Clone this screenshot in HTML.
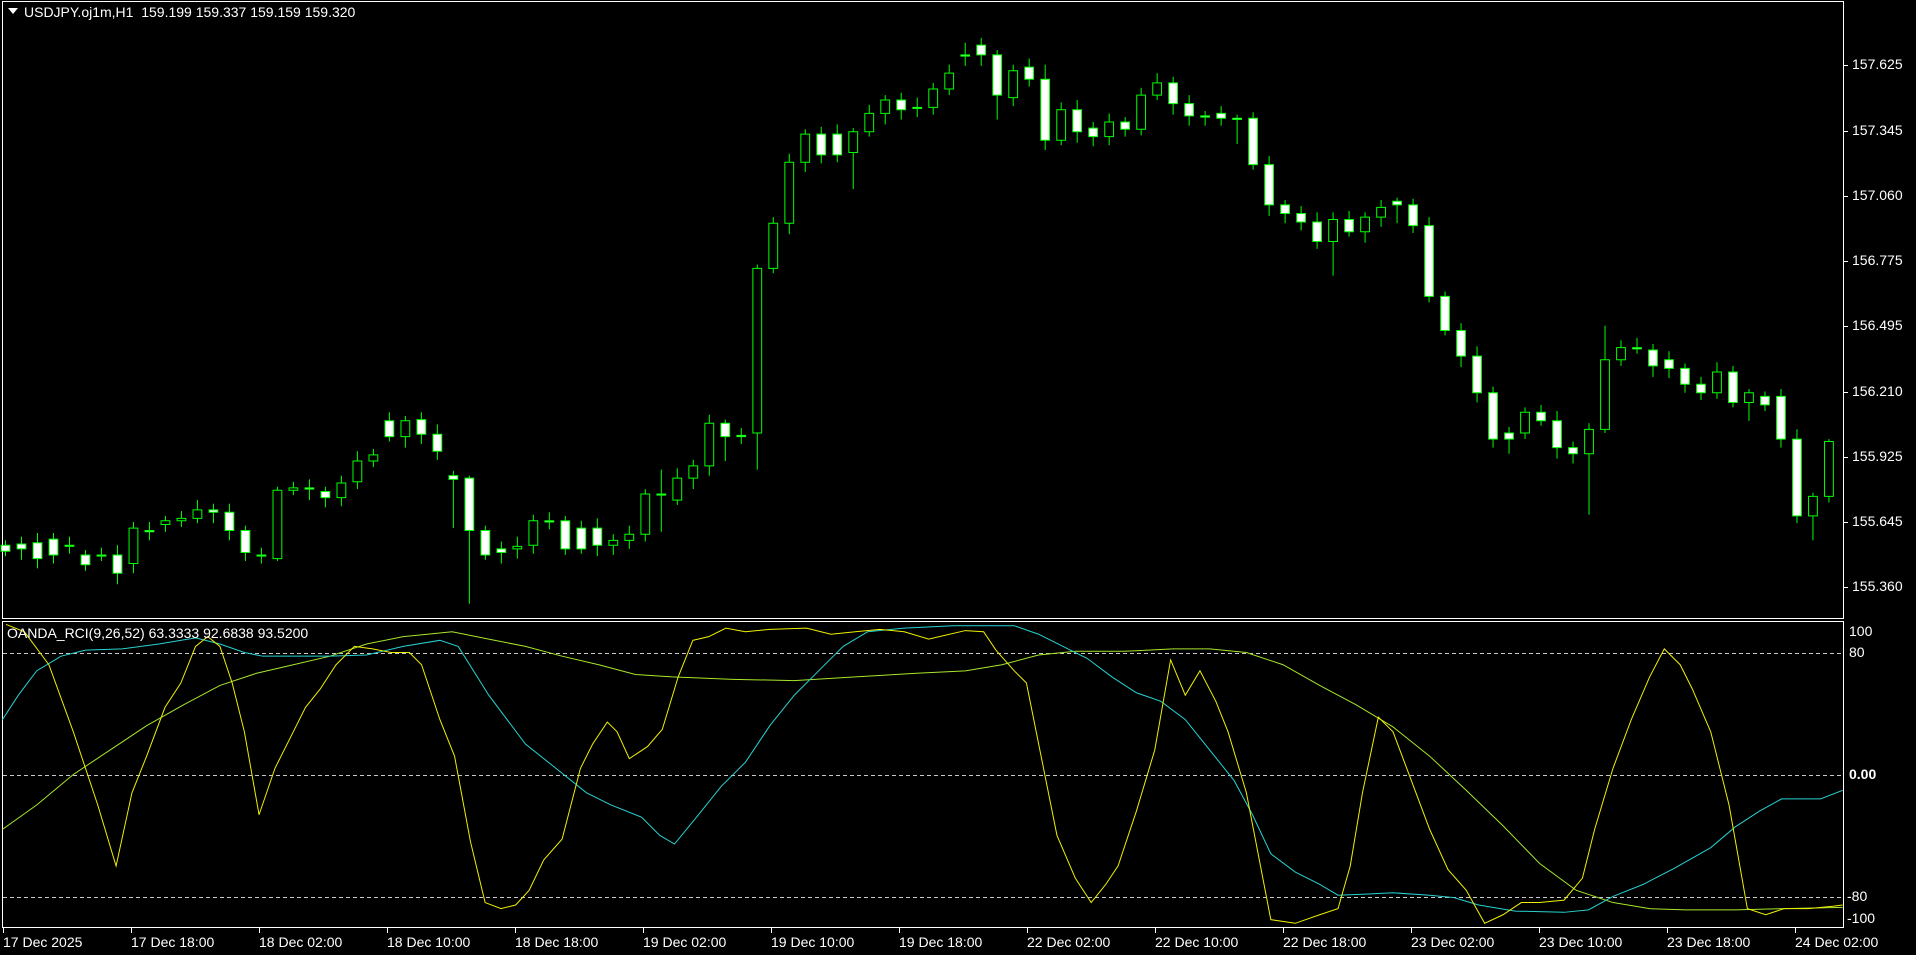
<!DOCTYPE html>
<html><head><meta charset="utf-8">
<style>
html,body{margin:0;padding:0;background:#000;width:1916px;height:955px;overflow:hidden;font-family:"Liberation Sans",sans-serif;}
.t{position:absolute;color:#fff;font-size:14px;white-space:nowrap;line-height:15px;}
</style></head><body>
<svg id="fr" width="1916" height="955" style="position:absolute;left:0;top:0" xmlns="http://www.w3.org/2000/svg">
<g stroke="#fff" stroke-width="1" fill="none" shape-rendering="crispEdges">
<rect x="2.5" y="1.5" width="1841" height="617"/>
<rect x="2.5" y="621.5" width="1841" height="306"/>
</g>
<g stroke="#c8c8c8" stroke-dasharray="4,3" shape-rendering="crispEdges">
<line x1="3" x2="1843" y1="653.5" y2="653.5"/>
<line x1="3" x2="1843" y1="775.5" y2="775.5"/>
<line x1="3" x2="1843" y1="897.5" y2="897.5"/>
</g>
<g id="ticks" stroke="#fff" shape-rendering="crispEdges"></g>
<path d="M8 8 L18 8 L13 14 Z" fill="#fff"/>
</svg>
<svg id="ch" width="1916" height="955" viewBox="0 0 1568 783" preserveAspectRatio="none" style="position:absolute;left:0;top:0" xmlns="http://www.w3.org/2000/svg"></svg>
<div class="t" style="left:24px;top:5px">USDJPY.oj1m,H1&nbsp; 159.199 159.337 159.159 159.320</div>
<div class="t" style="left:7px;top:626px">OANDA_RCI(9,26,52) 63.3333 92.6838 93.5200</div>
<div id="lbl"></div>
<script>
var lbl=document.getElementById('lbl'),ticks=document.getElementById('ticks'),h='',tk='';
var prices=[['157.625',65],['157.345',131],['157.060',196],['156.775',261],['156.495',326],['156.210',392],['155.925',457],['155.645',522],['155.360',587]];
prices.forEach(function(p){h+='<div class="t" style="left:1852px;top:'+(p[1]-8)+'px">'+p[0]+'</div>';tk+='<line x1="1844" x2="1848" y1="'+(p[1]+.5)+'" y2="'+(p[1]+.5)+'"/>';});
[['100',632],['80',653],['0.00',775],['-80',897],['-100',919]].forEach(function(p){h+='<div class="t" style="left:'+(p[0][0]=='-'?1847:1849)+'px;top:'+(p[1]-8)+'px'+(p[0]=='0.00'?';font-weight:bold':'')+'">'+p[0]+'</div>';});
var d=['17 Dec 2025','17 Dec 18:00','18 Dec 02:00','18 Dec 10:00','18 Dec 18:00','19 Dec 02:00','19 Dec 10:00','19 Dec 18:00','22 Dec 02:00','22 Dec 10:00','22 Dec 18:00','23 Dec 02:00','23 Dec 10:00','23 Dec 18:00','24 Dec 02:00'];
d.forEach(function(s,i){var x=3+128*i;h+='<div class="t" style="left:'+x+'px;top:935px">'+s+'</div>';tk+='<line x1="'+(x+.5)+'" x2="'+(x+.5)+'" y1="928" y2="933"/>';});
lbl.innerHTML=h;ticks.innerHTML=tk;
var C=[[447,452],[446,450],[445,458],[442,455],[447,448],[455,463],[455,456],[455,470],[462,433],[435,436],[430,427],[427,425],[425,418],[418,420],[420,435],[435,453],[455,456],[458,402],[402,400],[400,401],[403,408],[408,396],[395,378],[378,373],[345,358],[358,345],[344,356],[356,370],[390,393],[392,435],[435,455],[450,453],[450,448],[447,427],[427,428],[427,450],[433,450],[433,447],[447,443],[443,438],[438,405],[405,406],[410,392],[392,382],[382,347],[347,358],[357,358],[355,220],[220,183],[183,133],[133,110],[110,127],[110,127],[125,108],[108,93],[93,82],[82,90],[88,89],[88,73],[73,60],[45,46],[37,45],[45,78],[80,58],[55,65],[65,115],[115,90],[90,108],[105,112],[112,100],[100,106],[106,78],[78,68],[68,85],[85,95],[95,96],[93,97],[97,98],[97,135],[135,168],[168,175],[175,182],[182,198],[198,180],[180,190],[190,178],[178,170],[165,168],[168,185],[185,243],[243,271],[271,292],[292,322],[322,360],[355,360],[355,338],[338,345],[345,367],[367,372],[372,352],[352,295],[295,285],[285,286],[287,300],[295,302],[302,315],[315,322],[322,305],[305,330],[330,322],[325,332],[325,360],[360,423],[423,407],[407,362]];
var W={8:[5,8],17:[3,2],28:[4,40],29:[2,60],47:[4,3],53:[3,30],60:[10,8],62:[4,20],65:[12,8],77:[3,20],83:[6,28],87:[3,15],94:[5,12],99:[5,50],100:[28,3],109:[3,15],110:[4,5],113:[3,20],114:[2,5],45:[3,20],41:[20,30],47:[3,30]};
var s='';
C.forEach(function(c,i){var x=4.5+13.09*i,o=c[0],cl=c[1],top=Math.min(o,cl),bot=Math.max(o,cl),w=W[i]||[4+(i*7%5),4+(i*5%6)];
s+='<line x1="'+x+'" x2="'+x+'" y1="'+(top-w[0])+'" y2="'+(bot+w[1])+'" stroke="#00ff00" vector-effect="non-scaling-stroke"/>';
var bh=Math.max(bot-top,0.6);
s+='<rect x="'+(x-3.6)+'" y="'+top+'" width="7.2" height="'+bh+'" fill="'+(cl<o?'#000':'#fff')+'" stroke="#00ff00" vector-effect="non-scaling-stroke"/>';});
function pl(p,col){return '<polyline fill="none" stroke="'+col+'" vector-effect="non-scaling-stroke" points="'+p.map(function(a){return a.join(',')}).join(' ')+'"/>';}
var Y=[[5,512],[20,518],[40,545],[60,600],[80,660],[95,710],[108,650],[120,620],[135,580],[148,560],[160,530],[170,522],[180,530],[190,560],[200,600],[212,668],[225,630],[240,600],[250,580],[262,565],[275,545],[290,530],[305,532],[320,535],[335,535],[345,545],[360,590],[372,620],[385,690],[397,740],[410,745],[422,742],[433,730],[445,705],[460,688],[475,630],[485,610],[497,592],[505,600],[515,622],[530,612],[542,598],[555,555],[567,525],[580,522],[594,515],[610,518],[630,516],[660,515],[680,520],[700,518],[720,516],[740,518],[760,524],[790,517],[805,518],[815,533],[830,550],[840,560],[850,610],[865,685],[880,720],[893,740],[905,725],[915,710],[930,665],[945,615],[958,541],[970,570],[982,550],[995,575],[1005,600],[1020,650],[1040,754],[1060,757],[1080,750],[1095,745],[1105,710],[1115,650],[1128,588],[1140,600],[1155,640],[1170,680],[1185,713],[1200,730],[1215,757],[1230,750],[1245,740],[1260,740],[1280,738],[1295,720],[1305,680],[1320,630],[1335,590],[1350,555],[1362,532],[1375,545],[1385,565],[1400,600],[1415,660],[1430,745],[1445,750],[1460,745],[1480,745],[1500,743],[1508,742]];
var Cy=[[2,590],[15,570],[30,550],[50,538],[70,533],[100,532],[130,528],[160,523],[180,528],[200,535],[215,538],[245,538],[270,538],[300,537],[330,530],[360,525],[375,530],[400,570],[430,610],[455,630],[480,650],[500,660],[525,670],[540,685],[552,692],[570,670],[590,645],[610,625],[630,595],[650,570],[670,550],[690,530],[710,518],[740,515],[780,513],[830,513],[850,520],[870,530],[890,540],[910,555],[930,568],[950,575],[970,590],[990,615],[1010,640],[1025,668],[1040,700],[1060,715],[1080,725],[1095,734],[1120,733],[1140,732],[1170,734],[1190,736],[1210,742],[1240,747],[1280,748],[1300,746],[1320,735],[1345,725],[1370,712],[1400,695],[1420,678],[1440,665],[1458,655],[1475,655],[1490,655],[1508,648]];
var G=[[2,680],[30,660],[60,635],[90,615],[120,595],[150,578],[180,562],[210,552],[240,545],[270,538],[300,528],[330,522],[370,518],[400,524],[430,530],[460,538],[490,545],[520,553],[550,555],[600,557],[650,558],[700,555],[750,552],[790,550],[820,545],[850,537],[880,534],[920,534],[960,532],[990,532],[1020,535],[1050,545],[1080,562],[1110,578],[1140,596],[1170,620],[1200,648],[1230,677],[1260,708],[1290,730],[1320,740],[1350,745],[1380,746],[1420,746],[1460,745],[1508,744]];
s+=pl(G,'#a8e62a')+pl(Cy,'#28d2d2')+pl(Y,'#f0f000');
document.getElementById('ch').innerHTML=s;
</script>
</body></html>
